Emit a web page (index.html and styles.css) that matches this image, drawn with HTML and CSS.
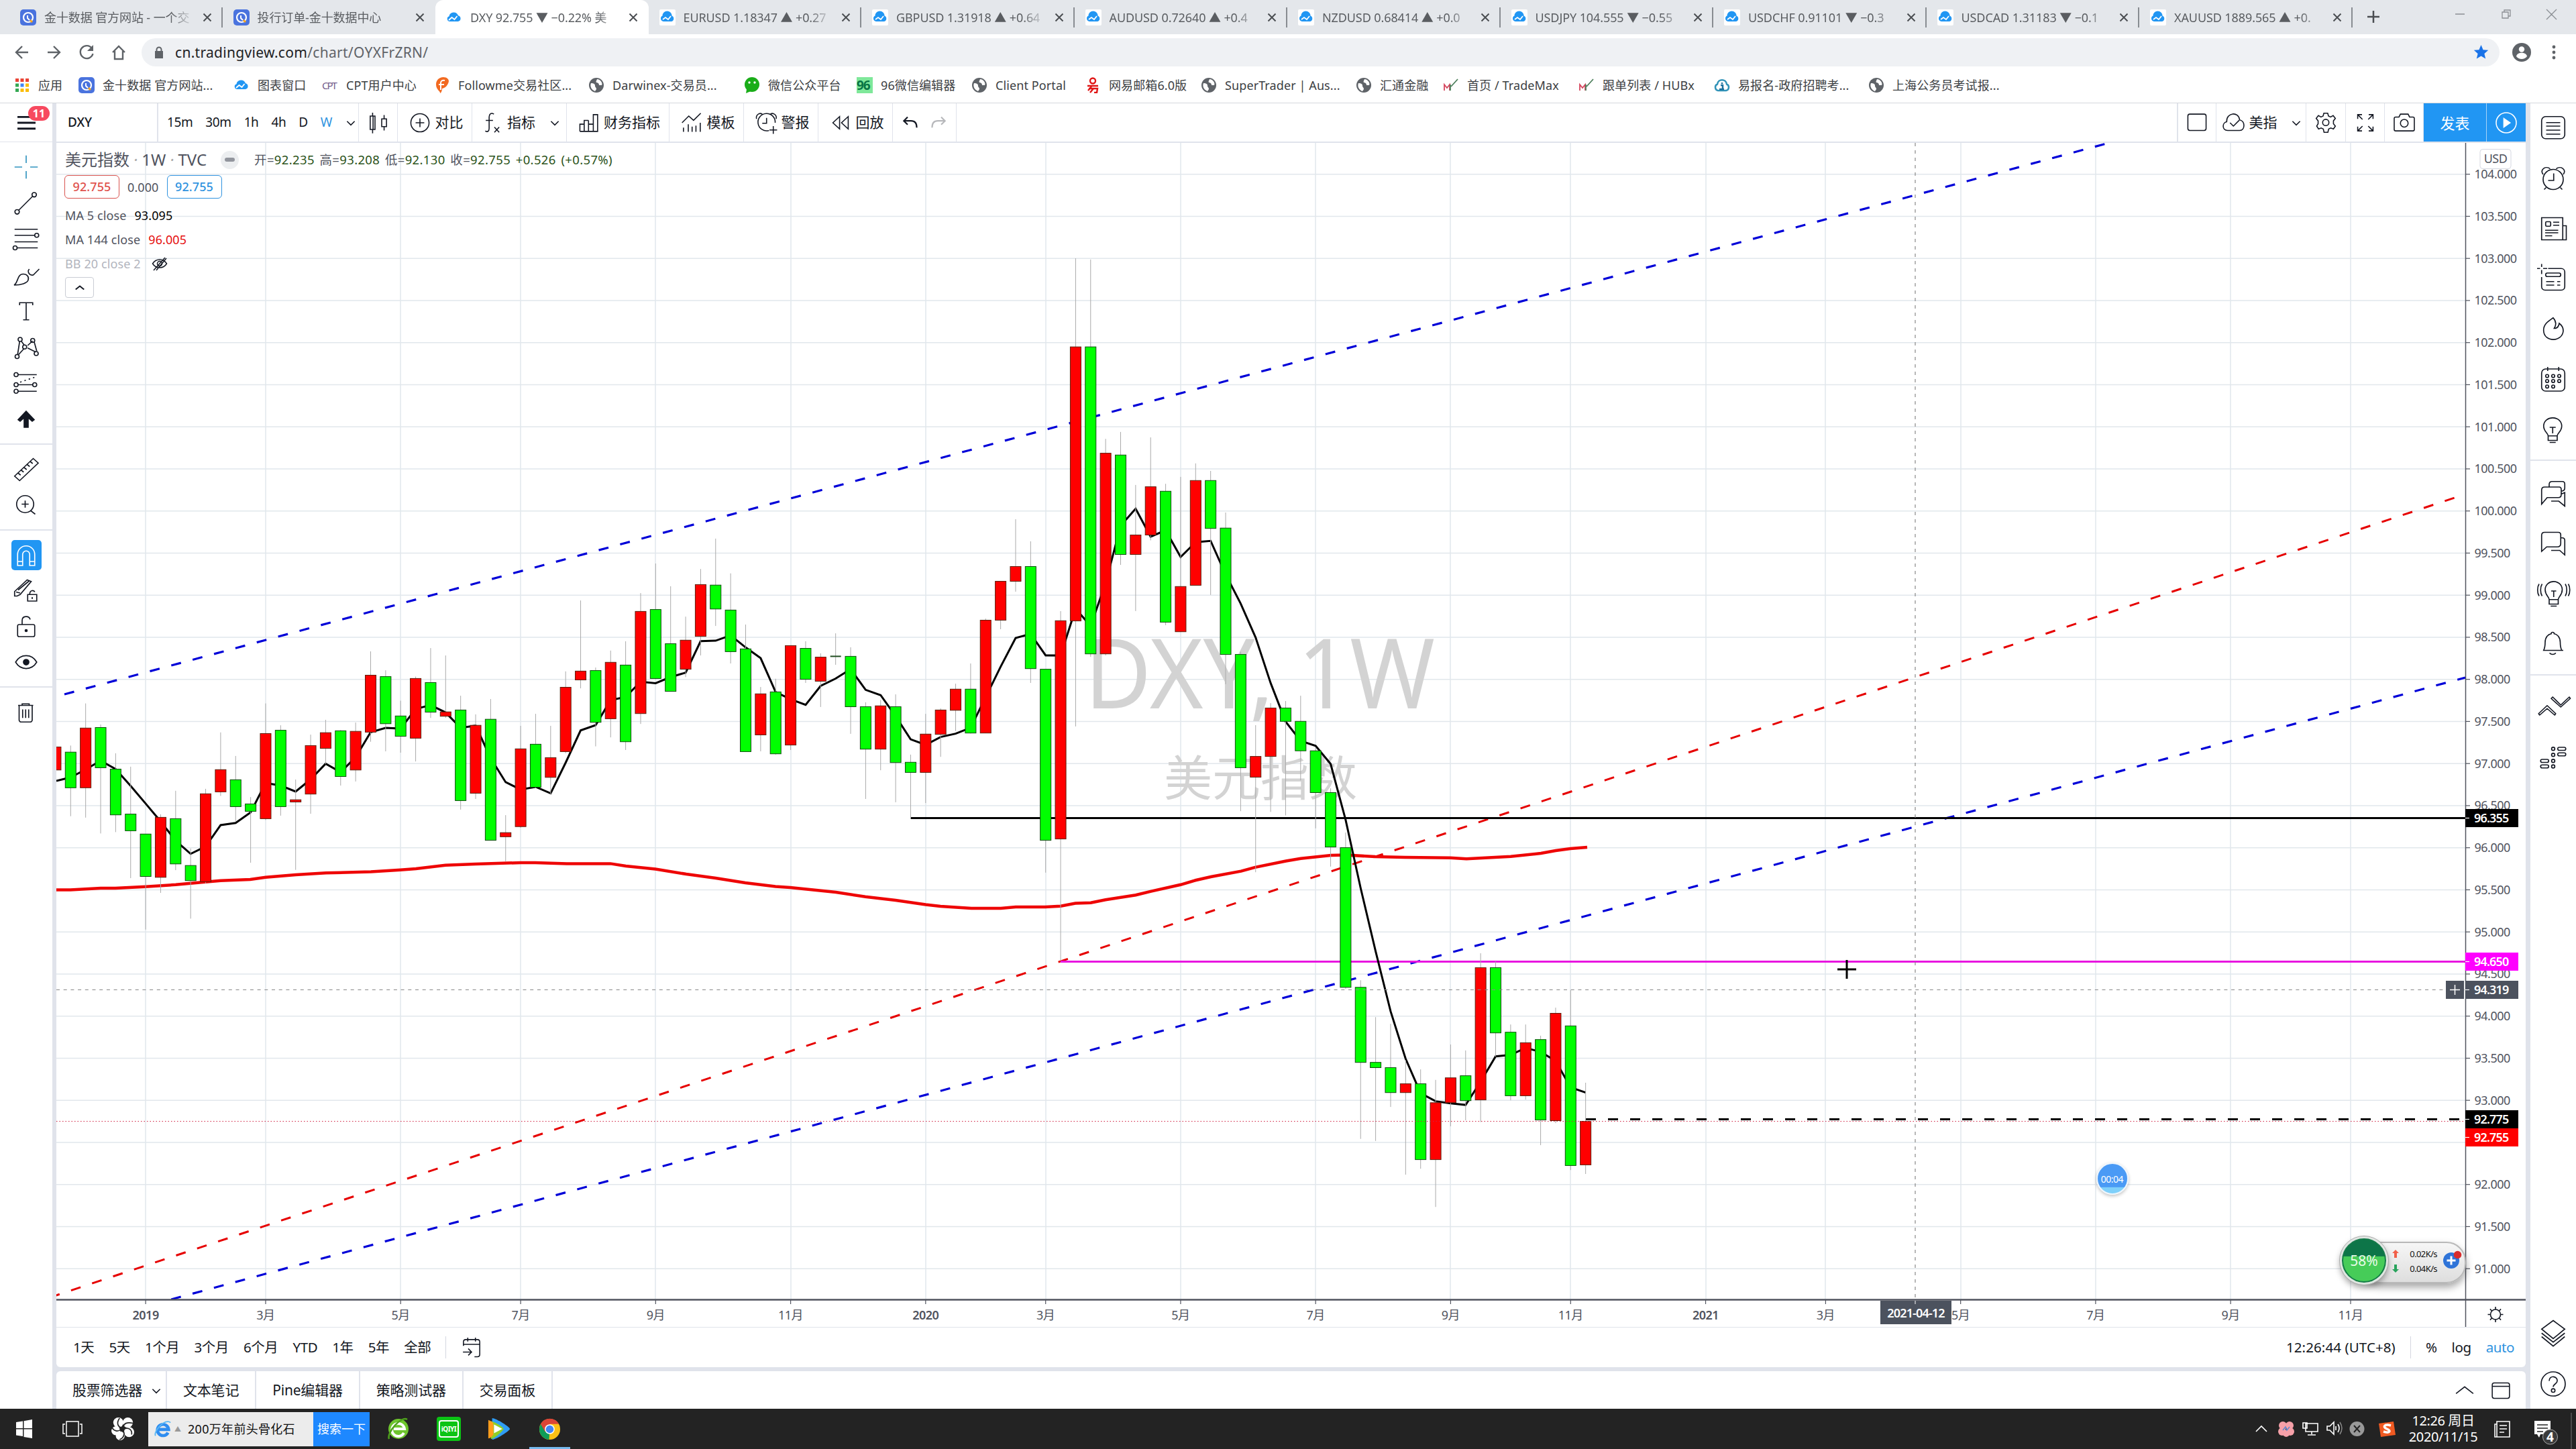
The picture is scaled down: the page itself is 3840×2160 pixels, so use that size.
FILE: index.html
```html
<!DOCTYPE html>
<html lang="zh-CN">
<head>
    <meta charset="UTF-8">
    <title>DXY 92.755 ▼ −0.22% 美指</title>
    <link rel="stylesheet" href="styles.css">
</head>
<body>
    <svg class="sprite">
        <symbol id="i-jin" viewBox="0 0 24 24"><rect width="24" height="24" rx="5" fill="#4a73de"/><circle cx="12" cy="12" r="7" fill="none" stroke="#fff" stroke-width="2.2"/><path d="M11 9v4l3 3" fill="none" stroke="#fff" stroke-width="2"/><path d="M15 16l3 3" stroke="#f5a623" stroke-width="3"/></symbol>
        <symbol id="i-cloud" viewBox="0 0 24 24"><path d="M5.500 18a4 4 0 0 1-1-7.800 7 7 0 0 1 13.500-1A4.500 4.500 0 0 1 18 18z" fill="#2196f3"/><path d="M4 16l4.500-4 4 3 4-5" fill="none" stroke="#fff" stroke-width="1.800"/></symbol>
        <symbol id="i-cloudbox" viewBox="0 0 24 24"><rect width="24" height="24" rx="2" fill="#fff"/><path d="M6 18a4.500 4.500 0 0 1-1.500-8.500 7 7 0 0 1 14 0A4.500 4.500 0 0 1 18 18z" fill="#2196f3"/><path d="M5 15l4-3 4 3 4-5" fill="none" stroke="#fff" stroke-width="1.800"/></symbol>
        <symbol id="i-globe" viewBox="0 0 24 24"><circle cx="12" cy="12" r="11" fill="#5f6368"/><path d="M4 9c4 0 6 1 6 4 0 2 2 2 2 5l-2 3c-5-2-8-7-6-12zM13 3c-1 3-2 3-1 5 2 0 4 1 4 4h4c2-4-3-9-7-9z" fill="#fff"/></symbol>
        <symbol id="i-m" viewBox="0 0 24 24"><path d="M2 20V11l4 5 4-5v9" fill="none" stroke="#d6455d" stroke-width="1.800"/><path d="M11 20v-9M12 14L22 3" stroke="#4d7f5c" stroke-width="1.800"/></symbol>
        <symbol id="i-x" viewBox="0 0 14 14"><path d="M1.500 1.500l11 11m0-11l-11 11" stroke="#4a4d51" stroke-width="2"/></symbol>
        <symbol id="i-chev" viewBox="0 0 16 16"><path d="M3 6l5 5 5-5" fill="none" stroke="#131722" stroke-width="1.400"/></symbol>
    </svg>

    <div class="tabs">
        <div class="tab"><svg><use href="#i-jin"/></svg><span>金十数据 官方网站 - 一个交</span><svg class="close"><use href="#i-x"/></svg></div>
        <div class="tab quiet"><svg><use href="#i-jin"/></svg><span>投行订单-金十数据中心</span><svg class="close"><use href="#i-x"/></svg></div>
        <div class="tab active"><svg><use href="#i-cloud"/></svg><span>DXY 92.755 ▼ −0.22% 美</span><svg class="close"><use href="#i-x"/></svg></div>
        <div class="tab"><svg><use href="#i-cloudbox"/></svg><span>EURUSD 1.18347 ▲ +0.27</span><svg class="close"><use href="#i-x"/></svg></div>
        <div class="tab"><svg><use href="#i-cloudbox"/></svg><span>GBPUSD 1.31918 ▲ +0.64</span><svg class="close"><use href="#i-x"/></svg></div>
        <div class="tab"><svg><use href="#i-cloudbox"/></svg><span>AUDUSD 0.72640 ▲ +0.4</span><svg class="close"><use href="#i-x"/></svg></div>
        <div class="tab"><svg><use href="#i-cloudbox"/></svg><span>NZDUSD 0.68414 ▲ +0.0</span><svg class="close"><use href="#i-x"/></svg></div>
        <div class="tab"><svg><use href="#i-cloudbox"/></svg><span>USDJPY 104.555 ▼ −0.55</span><svg class="close"><use href="#i-x"/></svg></div>
        <div class="tab"><svg><use href="#i-cloudbox"/></svg><span>USDCHF 0.91101 ▼ −0.3</span><svg class="close"><use href="#i-x"/></svg></div>
        <div class="tab"><svg><use href="#i-cloudbox"/></svg><span>USDCAD 1.31183 ▼ −0.1</span><svg class="close"><use href="#i-x"/></svg></div>
        <div class="tab"><svg><use href="#i-cloudbox"/></svg><span>XAUUSD 1889.565 ▲ +0.</span><svg class="close"><use href="#i-x"/></svg></div>
        <svg class="newtab" viewBox="0 0 20 20"><path d="M10 1v18M1 10h18" stroke="#4a4d51" stroke-width="2.500"/></svg>
        <svg class="window-buttons" viewBox="0 0 152 20"><path d="M0 10h14M70 7h9v9h-9zM73 7V4h9v9h-3M136 3l15 15m0-15l-15 15" fill="none" stroke="#8b8f94" stroke-width="1.300"/></svg>
    </div>

    <div class="address">
        <svg class="nav" viewBox="0 0 216 40"><g fill="none" stroke="#5f6368" stroke-width="2.400"><path d="M42 20H25m8-9l-9 9 9 9"/><path d="M71 20h17m-8-9l9 9-9 9"/><path d="M137 14a9.500 9.500 0 1 0 1.500 8"/><path d="M168 20l9-9 9 9m-15-2v12h12V18"/></g><path d="M139 9v9h-9z" fill="#5f6368"/></svg>
        <div class="url">
            <svg class="lock" viewBox="0 0 14 18"><path d="M1 7h12v11H1z" fill="#5f6368"/><path d="M3.500 8V5a3.500 3.500 0 0 1 7 0v3" fill="none" stroke="#5f6368" stroke-width="2"/></svg>
            <span class="host">cn.tradingview.com</span><span class="path">/chart/OYXFrZRN/</span>
            <svg class="star" viewBox="0 0 24 24"><path d="M12 1l3.200 7.500 8 .7-6.100 5.300 1.900 8L12 18.200 5 22.500l1.900-8L.8 9.200l8-.7z" fill="#1a73e8"/></svg>
        </div>
        <svg class="avatar" viewBox="0 0 28 28"><circle cx="14" cy="14" r="14" fill="#5f6368"/><circle cx="14" cy="9.500" r="4.200" fill="#fff"/><path d="M6 20c1-7 15-7 16 0a10 10 0 0 1-16 0z" fill="#fff"/></svg>
        <svg class="dots" viewBox="0 0 6 22"><circle cx="3" cy="3" r="2.400"/><circle cx="3" cy="11" r="2.400"/><circle cx="3" cy="19" r="2.400"/></svg>
    </div>

    <div class="bookmarks">
        <div class="bm bm-apps"><svg viewBox="0 0 24 24"><path d="M2 2h5v5H2zM9.500 2h5v5h-5zM17 2h5v5h-5z" fill="#ea4335"/><path d="M2 9.500h5v5H2z" fill="#34a853"/><path d="M9.500 9.500h5v5h-5z" fill="#4285f4"/><path d="M17 9.500h5v5h-5zM9.500 17h5v5h-5zM17 17h5v5h-5z" fill="#fbbc05"/><path d="M2 17h5v5H2z" fill="#34a853"/></svg>应用</div>
        <div class="bm bm-jin"><svg><use href="#i-jin"/></svg>金十数据 官方网站...</div>
        <div class="bm bm-chart"><svg><use href="#i-cloud"/></svg>图表窗口</div>
        <div class="bm bm-cpt"><i class="cpt">CPT</i>CPT用户中心</div>
        <div class="bm bm-follow"><svg viewBox="0 0 24 24"><path d="M9 24c1-3-6-5-6-13C3 5 7 0 14 0c5 0 8 3 8 6-1 6-5 10-10 11 0 3-1 6-3 7z" fill="#f26a21"/><path d="M10 19V9c0-3 2-5 6-4M7 11h8" fill="none" stroke="#fff" stroke-width="2"/></svg>Followme交易社区...</div>
        <div class="bm bm-darwin"><svg><use href="#i-globe"/></svg>Darwinex-交易员...</div>
        <div class="bm bm-wechat"><svg viewBox="0 0 24 24"><circle cx="12" cy="11" r="11" fill="#1aad19"/><path d="M4 18l-1 6 7-3z" fill="#1aad19"/><circle cx="8" cy="8" r="1.700" fill="#fff"/><circle cx="16" cy="8" r="1.700" fill="#fff"/></svg>微信公众平台</div>
        <div class="bm bm-editor"><i class="n96">96</i>96微信编辑器</div>
        <div class="bm bm-portal"><svg><use href="#i-globe"/></svg>Client Portal</div>
        <div class="bm bm-mail"><svg viewBox="0 0 24 24"><g fill="none" stroke="#e01515" stroke-width="2.400"><circle cx="12" cy="5.500" r="4"/><path d="M4 13h16M6 17h13l-1 6h-4M10 14l-5 6M13 17l-5 6"/></g></svg>网易邮箱6.0版</div>
        <div class="bm bm-super"><svg><use href="#i-globe"/></svg>SuperTrader | Aus...</div>
        <div class="bm bm-fx"><svg><use href="#i-globe"/></svg>汇通金融</div>
        <div class="bm bm-m"><svg><use href="#i-m"/></svg>首页 / TradeMax</div>
        <div class="bm bm-m"><svg><use href="#i-m"/></svg>跟单列表 / HUBx</div>
        <div class="bm bm-exam"><svg viewBox="0 0 24 24"><path d="M6 20a5 5 0 0 1-1-9.500C6 2 18 2 19 10.500A5 5 0 0 1 18 20z" fill="none" stroke="#3193b8" stroke-width="2.500"/><path d="M12 8v2m-2 2h3v5m-5 1h7" stroke="#1b6f9c" stroke-width="2.500" fill="none"/></svg>易报名-政府招聘考...</div>
        <div class="bm"><svg><use href="#i-globe"/></svg>上海公务员考试报...</div>
    </div>

    <div class="app">
        <div class="rail rail-left">
            <div class="menu"><svg viewBox="0 0 28 24"><path d="M0 3h28M0 12h28M0 21h28" stroke="#131722" stroke-width="3"/></svg><b>11</b></div>
            <div class="group">
                <svg class="blue" viewBox="0 0 28 28"><path d="M14 2.500V10M14 18v7.500M2.500 14H10M18 14h7.500"/></svg>
                <svg viewBox="0 0 28 28"><circle cx="5" cy="22.500" r="2.200"/><circle cx="22" cy="5.500" r="2.200"/><path d="M6.500 21L20.500 7"/></svg>
                <svg viewBox="0 0 28 28"><path d="M2.500 4.500h23M2.500 10.500h20M2.500 17h23M5 23h20.500"/><circle cx="24.500" cy="10.500" r="2"/><circle cx="3" cy="23" r="2"/></svg>
                <svg viewBox="0 0 28 28"><path d="M2 24c4-2 3-11 9-11 4 0 6 3 5 6-1 3-7 5-14 5zM16 9.500c0 3 2 5 5 4.500L27 8M16 10l1-2"/></svg>
                <svg viewBox="0 0 28 28"><path d="M7.500 8V5.500h13V8M14 5.500v17M11 22.500h6"/></svg>
                <svg viewBox="0 0 28 28"><path d="M5.500 21L7.500 8M9 7.500l3 4M15.500 12l5-4.500M22 8.500l2.500 9M6.500 21L12 15M15.500 14.500l8 4"/><circle cx="8" cy="6" r="2"/><circle cx="20.500" cy="7" r="2"/><circle cx="12.500" cy="13.500" r="2"/><circle cx="5" cy="23" r="2"/><circle cx="24" cy="20" r="2"/></svg>
                <svg viewBox="0 0 28 28"><circle cx="4" cy="5" r="2"/><circle cx="4" cy="15" r="2"/><circle cx="22.500" cy="15" r="2"/><circle cx="4" cy="21.500" r="2"/><path d="M6 5h18.500M6 15h14.500M6 21.500h18.500"/><path d="M8 12.500L24 7" stroke-dasharray="1.500 3"/></svg>
                <svg viewBox="0 0 28 28"><path d="M14 6l8 8.500-2 1.500-4-3.500V22h-4v-9.500L8 16l-2-1.500z" fill="#131722"/></svg>
            </div>
            <div class="group">
                <svg viewBox="0 0 28 28"><path d="M2.500 20.500L21 3l5 4.500L7.500 25zM6 17.500l2.500 2M9 14.500l2.500 2M12 12l2.500 2M15 9l2.500 2M18 6l2.500 2"/></svg>
                <svg viewBox="0 0 28 28"><circle cx="13" cy="13" r="8.500"/><path d="M13 9.500v7M9.500 13h7M18.500 19.500l4.500 3.500"/></svg>
            </div>
            <div class="group">
                <span class="magnet"><svg viewBox="0 0 28 28"><path d="M5.500 24V13a8.500 8.500 0 0 1 17 0v11h-5V13a3.500 3.500 0 0 0-7 0v11zM5.500 20h5M17.500 20h5"/></svg></span>
                <svg viewBox="0 0 28 28"><path d="M2.500 19v-4.500L15 3l4 1.500L8 17.500 5 19zM4 15l4 1M6 13L17 4"/><path d="M15.500 17.500h9v6.500h-9zM17.500 17.500c0-5 4.500-4.500 5-2.500M20 20v2"/></svg>
                <svg viewBox="0 0 28 28"><rect x="5.500" y="12" width="17" height="12" rx="1.500"/><path d="M10 12V8c0-5 7-5 8-1"/><circle cx="14" cy="18" r="1" fill="#131722"/></svg>
                <svg viewBox="0 0 28 28"><path d="M3.500 14c5-8.500 16-8.500 21 0-5 8.500-16 8.500-21 0z"/><circle cx="14" cy="14" r="2.700" fill="#131722"/></svg>
            </div>
            <div class="group last">
                <svg viewBox="0 0 28 28"><path d="M6 7h15M10 7V5.500h7V7M7 7v14.500c0 1 1 2 2 2h9c1 0 2-1 2-2V7M10.500 11v8.500M13.500 11v8.500M16.500 11v8.500"/></svg>
            </div>
        </div>

        <div class="main">
            <div class="toolbar">
                <div class="cell symbol">DXY</div>
                <div class="cell intervals"><span>15m</span><span>30m</span><span>1h</span><span>4h</span><span>D</span><span class="on">W</span><svg class="chev"><use href="#i-chev"/></svg></div>
                <div class="cell w58"><svg class="ico" viewBox="0 0 28 28"><path d="M8.500 7v14M5.500 7h5v14h-5zM8 3.500V7M8 21v4M17.500 10h5v8h-5zM20 6v4M20 18v4"/></svg></div>
                <div class="cell w111"><svg class="ico" viewBox="0 0 28 28"><circle cx="14" cy="14" r="9.500"/><path d="M14 9.500v9M9.500 14h9"/></svg>对比</div>
                <div class="cell w141"><svg class="ico" viewBox="0 0 28 28"><path d="M17 5c-3-2-5 0-5 3v12c0 3-2 4-4 2.500M8.500 11.500H16M17.500 18.500l5 5.500M22.500 18.500l-5 5.500"/></svg>指标<svg class="chev"><use href="#i-chev"/></svg></div>
                <div class="cell w153"><svg class="ico" viewBox="0 0 28 28"><path d="M4.500 23v-7.500h4.500V23M9 23V11.500h4.500M13.500 23V11.500M18.500 23V5.500H23V23zM14 15.500h4.500M4.500 23h14"/></svg>财务指标</div>
                <div class="cell w111"><svg class="ico" viewBox="0 0 28 28"><path d="M4 14l7-7 5 4.500L23.500 4M5.500 19v4.500M10.500 15.500v8M14.500 18v5.500M18.500 17v6.500M23 14v9.500"/></svg>模板</div>
                <div class="cell w111"><svg class="ico" viewBox="0 0 28 28"><path d="M17 22a9 9 0 1 1 6.500-8M14.500 9v5.500H10M21.500 17.500v8M17.500 21.500h8M4 10c-1-4 3-7 6-5M24.500 10c1-4-3-7-6-5"/></svg>警报</div>
                <div class="cell w111"><svg class="ico" viewBox="0 0 28 28"><path d="M13 7.500L6 14l7 6.500zM22 7.500L15 14l7 6.500z"/></svg>回放</div>
                <div class="cell w95"><svg class="ico" viewBox="0 0 28 28"><path d="M10.500 8L6.500 12l4 4M7 12h7c4 0 6 2 6 7" stroke-width="1.500"/></svg><svg class="ico faded" viewBox="0 0 28 28"><path d="M17.500 8l4 4-4 4M21 12h-7c-4 0-6 2-6 7" stroke-width="1.500"/></svg></div>
                <div class="fill"></div>
                <div class="cell w59 lined"><svg class="ico" viewBox="0 0 28 28"><rect x="4.500" y="5" width="19" height="17" rx="2"/></svg></div>
                <div class="cell w134"><svg class="ico" viewBox="0 0 28 28"><path d="M7.500 22c-6 0-6-8-1-9C6 3 19 2 20 11c6 1 6 11 0 11zM10 14l3.500 3.500 6-6"/></svg>美指<svg class="chev"><use href="#i-chev"/></svg></div>
                <div class="cell w59"><svg class="ico" viewBox="0 0 28 28"><path d="M12 4h4l.8 3 2.200 1 2.700-1.500 2.300 3L22 12v3l2 2.500-2 3-2.800-1-2.200 1-.8 3.500h-4l-.8-3.500-2.200-1-2.700 1-2-3L6 15v-3L4 9.500l2.300-3L9 8l2.200-1z"/><circle cx="14" cy="13.700" r="3.300"/></svg></div>
                <div class="cell w58"><svg class="ico" viewBox="0 0 28 28"><path d="M6 10V5.500h4.500M6 5.500l5 5M22 10V5.500h-4.500M22 5.500l-5 5M6 18v4.500h4.500M6 22.500l5-5M22 18v4.500h-4.500M22 22.500l-5-5"/></svg></div>
                <div class="cell w58"><svg class="ico" viewBox="0 0 28 28"><path d="M10 5h8l1.500 3H23c1 0 1.500.5 1.500 1.500V21c0 1-.5 1.500-1.500 1.500H5c-1 0-1.500-.5-1.500-1.500V9.500C3.500 8.500 4 8 5 8h3.500z"/><circle cx="14" cy="14.500" r="4"/></svg></div>
                <div class="cell publish">发表</div>
                <div class="cell play"><svg class="ico" viewBox="0 0 28 28"><circle cx="14" cy="14" r="10.500"/><path d="M11.500 9.500l6.500 4.500-6.500 4.500z" fill="#fff"/></svg></div>
            </div>

            <div class="chart">
                <svg id="chart" viewBox="84 213 3681 1765"></svg>
                <div class="legend">
                    <div class="title">美元指数 <em>·</em> 1W <em>·</em> TVC<i class="pill"></i><span class="ohlc">开=<b>92.235</b> 高=<b>93.208</b> 低=<b>92.130</b> 收=<b>92.755</b> <b>+0.526 (+0.57%)</b></span></div>
                    <div class="prices"><span class="sell">92.755</span><span>0.000</span><span class="buy">92.755</span></div>
                    <div class="study">MA 5 close<b>93.095</b></div>
                    <div class="study">MA 144 close<b class="red">96.005</b></div>
                    <div class="study off">BB 20 close 2<svg viewBox="0 0 24 24"><path d="M1.500 12c5-8 16-8 21 0-5 8-16 8-21 0zM3 22L20 3M7 22L22 4" /><circle cx="12" cy="12" r="3.500"/></svg></div>
                    <div class="collapse"><svg viewBox="0 0 16 16"><path d="M3 10l5-4 5 4"/></svg></div>
                </div>
                <div class="timer">00:04</div>
                <div class="netball">
                    <div class="ball">58%</div>
                    <div class="speeds"><span><svg viewBox="0 0 10 12"><path d="M5 0l5 5H7v7H3V5H0z" fill="#f1604a"/></svg>0.02K/s</span><span><svg viewBox="0 0 10 12"><path d="M5 12l5-5H7V0H3v7H0z" fill="#28a35c"/></svg>0.04K/s</span></div>
                    <svg class="plus" viewBox="0 0 28 28"><circle cx="12" cy="16" r="12" fill="#2f74d8"/><path d="M12 9.500v13M5.500 16h13" stroke="#fff" stroke-width="3"/><circle cx="21.500" cy="7.500" r="5.800" fill="#d92b2b"/></svg>
                </div>
            </div>

            <div class="rangebar">
                <span>1天</span><span>5天</span><span>1个月</span><span>3个月</span><span>6个月</span><span>YTD</span><span>1年</span><span>5年</span><span>全部</span>
                <i class="line"></i>
                <svg class="ico" viewBox="0 0 28 28"><path d="M5.500 12V8c0-1.500 1-2.500 2.500-2.500h12c1.500 0 2.500 1 2.500 2.500v13c0 1.500-1 2.500-2.500 2.500h-3M5.500 10.500h17M10 3.500v4M18 3.500v4M5 18.500h9M10.500 15l3.500 3.500-3.500 3.500"/></svg>
                <div class="fill"></div>
                <span class="clock">12:26:44 (UTC+8)</span><i class="line"></i><span>%</span><span>log</span><span class="on">auto</span>
            </div>

            <div class="panels">
                <div>股票筛选器<svg class="chev"><use href="#i-chev"/></svg></div><div>文本笔记</div><div>Pine编辑器</div><div>策略测试器</div><div>交易面板</div>
                <div class="fill"></div>
                <svg class="ico" viewBox="0 0 28 28"><path d="M5 17l9-7 9 7"/></svg>
                <svg class="ico" viewBox="0 0 28 28"><rect x="5" y="6" width="18" height="16" rx="2"/><path d="M5 9.500h18"/></svg>
            </div>
        </div>

        <div class="rail rail-right">
            <div class="group">
                <svg viewBox="0 0 28 28"><rect x="2.500" y="2.500" width="23" height="22" rx="4"/><path d="M7 8.500h14M7 12h14M7 16h14M7 20h14"/></svg>
                <svg viewBox="0 0 28 28"><circle cx="14" cy="15" r="10"/><path d="M14.500 9v7H9M4 10C0 5 7 1 11 4.500M24 10c4-5-3-9-7-5.500M7 23l-2 2M21 23l2 2"/></svg>
                <svg viewBox="0 0 28 28"><path d="M2.500 3h21v22h-21zM23.500 11h3.500v14h-3.500M6 15.500h13M6 18h13M6 21h7M14 7.500h6M14 10.500h6"/><rect x="6.500" y="7" width="5" height="4.500" rx="1"/></svg>
                <svg viewBox="0 0 28 28"><path d="M9 3.500h13c2 0 3.500 1.500 3.500 3.500v14.500c0 2-1.500 3.500-3.500 3.500H6c-2 0-3.500-1.500-3.500-3.500V12M2.500-1v3M2.500 5v4M-2 3.500h3M4 3.500h4M7 16.500h8M7 20h8M18 16.500h3M18 20h3"/><rect x="6.500" y="8" width="15" height="3.500" rx="1.700"/></svg>
                <svg viewBox="0 0 28 28"><path d="M14 2.500c-4 3-10 6-9.500 13C5 27 23 27 24 15.500c0-4-2-6-4-7.500-.5 3-2 5-5 5 2-3 2-7-1-10.500z"/></svg>
                <svg viewBox="0 0 28 28"><rect x="2.500" y="4" width="23" height="22" rx="4"/><path d="M8.500 2v4M19.500 2v4"/><circle cx="8" cy="11" r="1.500"/><circle cx="14" cy="11" r="1.500"/><circle cx="20" cy="11" r="1.500"/><circle cx="8" cy="16" r="1.500"/><circle cx="14" cy="16" r="1.500"/><circle cx="20" cy="16" r="1.500"/><circle cx="8" cy="21.500" r="1.500"/><circle cx="14" cy="21.500" r="1.500"/></svg>
                <svg viewBox="0 0 28 28"><path d="M9 20.500c0-3-4.500-4-4.500-10C5 0 22 0 22.500 10.500c0 6-4.500 7-4.500 10zM9 20.500v4.500h9v-4.500M10.500 27h6M13.500 18v-6M10.500 12h6"/></svg>
            </div>
            <div class="group">
                <svg viewBox="0 0 28 28"><path d="M2.500 25V11c0-2 1-3 3-3H20c1.500 0 2 1 2 2.500v5c0 2-1 3-3 3H8zM10 8V5.500c0-2 1-3 3-3h10c1.500 0 2.500 1 2.500 2.500v4c0 2-1.500 3-3.500 3M22 15l3.500-1.500V27l-6-5H12"/></svg>
                <svg viewBox="0 0 28 28"><path d="M2.500 22V6c0-2 1-3 3-3H19c1.500 0 2.500 1 2.500 2.500V14c0 2-1 3.500-3.500 3.500H7.500zM21.500 8.500H23c1.500 0 2.500 1 2.500 2.500v14.500l-5-4.500H12"/></svg>
                <svg viewBox="0 0 28 28"><path d="M10 20.500c0-3-4-4-4-10C6.500 0 22.500 0 23 10.500c0 6-4 7-4 10zM10 20.500v4.500h9v-4.500M11.500 27h6M14.500 18v-6M12 12h5M3 5c-2 3-2 9 0 12M0 5c-2 3-2 9 0 12M26 5c2 3 2 9 0 12M29 5c2 3 2 9 0 12"/></svg>
                <svg viewBox="0 0 28 28"><path d="M4.500 21c1-2 1.500-4 1.500-8 0-5 3-8 6-8.500 0-2 3-2 3 0 3 .5 6 3.500 6 8.500 0 4 .5 6 1.500 8zM4 21h20M10.500 23.500c1 2 5 2 6 0"/></svg>
            </div>
            <div class="group last">
                <svg viewBox="0 0 28 28"><path d="M-.5 20.500L8 12.500l8.500 8-1 1.500L8 15.500.5 22zM12 5.500l1.500-1.500 8 8L30 4l1 1.500-9.500 8.500z" stroke-linejoin="round"/></svg>
                <svg viewBox="0 0 28 28"><rect x="1.500" y="16" width="8" height="3" rx="1.500"/><rect x="1.500" y="21.500" width="8" height="3" rx="1.500"/><rect x="18.500" y="4" width="8" height="3" rx="1.500"/><rect x="18.500" y="9.500" width="8" height="3" rx="1.500"/><circle cx="14" cy="5.500" r="1.600"/><circle cx="14" cy="11.500" r="1.600"/><circle cx="14" cy="17.500" r="1.600"/><circle cx="14" cy="23" r="1.600"/></svg>
            </div>
            <div class="fill"></div>
            <svg viewBox="0 0 28 28"><path d="M14 1l11.500 8.500L14 19 2.500 9.500zM2.500 13.500L14 22.500l11.500-9M2.500 17L14 26.500 25.500 17"/></svg>
            <svg viewBox="0 0 28 28"><circle cx="14" cy="14" r="12"/><path d="M10 11c0-6 8.500-5 8 0 0 3-4 3-4 6"/><circle cx="14" cy="20.500" r="1.800"/></svg>
        </div>
    </div>

    <div class="taskbar">
        <svg class="start" viewBox="0 0 24 28"><path d="M0 4l10-1.500V13H0zM11.500 2.200L24 0v13H11.500zM0 14.500h10V25L0 23.500zM11.500 14.500H24V28l-12.500-2z" fill="#fff"/></svg>
        <svg class="taskview" viewBox="0 0 30 24"><path d="M6 1h18v22H6zM4 5H1v14h3M26 5h3v14h-3" fill="none" stroke="#fff" stroke-width="1.500"/></svg>
        <svg class="flower" viewBox="0 0 36 36"><g fill="#fff"><circle cx="11" cy="8" r="8"/><circle cx="26" cy="8" r="8"/><circle cx="7" cy="21" r="7"/><circle cx="28" cy="23" r="8"/><circle cx="14" cy="29" r="7"/></g><path d="M18 17C9 15 8 8 13 1M19 16c0-7 6-9 15-7M20 18c8-3 13 2 12 9M18 20c4 5 2 12-5 15M16 18C10 24 4 21 1 16" fill="none" stroke="#232323" stroke-width="1.800"/></svg>
        <div class="search">
            <svg viewBox="0 0 28 28"><path d="M22 20a9 9 0 1 1 1-5H7" fill="none" stroke="#2f8df0" stroke-width="5"/><path d="M2 25C-2 18 18-4 26 4" fill="none" stroke="#58b7f5" stroke-width="2"/></svg>
            <small>▲</small><span>200万年前头骨化石</span><b>搜索一下</b>
        </div>
        <svg class="app1" viewBox="0 0 32 36"><circle cx="16" cy="18" r="15" fill="#6ec52e"/><path d="M24 24a9.500 9.500 0 1 1 1-6H9" fill="none" stroke="#fff" stroke-width="4"/><path d="M2 33C-2 24 20-2 29 4" fill="none" stroke="#4ea31c" stroke-width="2.500"/></svg>
        <div class="iqiyi"><span>iQIYI</span></div>
        <svg class="app3" viewBox="0 0 36 36"><path d="M7 1c6 0 28 14 28 17S13 35 7 35z" fill="#2f9df4"/><path d="M5 6c5 0 20 9 20 12S10 34 5 34z" fill="#8fce28"/><path d="M1 4c3 1 7 3 8 6v17c-2 3-5 6-8 6z" fill="#ff9d1c"/><path d="M10 11l13 7-13 7z" fill="#fff"/></svg>
        <div class="chrome"><svg viewBox="0 0 34 34"><circle cx="17" cy="17" r="16" fill="#fbc116"/><path d="M17 17l-1 16A16 16 0 0 1 3.100 9z" fill="#0f9d58"/><path d="M17 17V9h14a16 16 0 0 0-28 0l7 12z" fill="#db4437"/><circle cx="17" cy="17" r="7.500" fill="#fff"/><circle cx="17" cy="17" r="6" fill="#4285f4"/></svg></div>
        <div class="fill"></div>
        <svg class="tray" viewBox="3355 2106 225 48">
            <g fill="none" stroke="#fff" stroke-width="1.600"><path d="M3363 2134l8-8 8 8"/><path d="M3437 2122h18v12h-18zM3433 2121h6v8h-6zM3446 2134v4M3440 2139h12"/><path d="M3469 2126h4l6-6v18l-6-6h-4zM3482 2126v6M3485 2123q4 6 0 12"/></g>
            <path d="M3488 2120q6 9 0 18" fill="none" stroke="#888" stroke-width="1.500"/>
            <g fill="#f5a0a8"><circle cx="3403" cy="2125" r="6"/><circle cx="3413" cy="2125" r="6"/><circle cx="3402" cy="2134" r="6"/><circle cx="3414" cy="2134" r="6"/><circle cx="3408" cy="2137" r="5"/></g><path d="M3403 2132l4-5 2 5 4-5" fill="none" stroke="#5f88cf" stroke-width="1.500"/>
            <circle cx="3513.500" cy="2130" r="11" fill="#999"/><path d="M3509 2125l9 10m0-10l-9 10" stroke="#232323" stroke-width="2"/>
            <path d="M3546 2122l22-3 3 20-22 3z" fill="#f05a22"/><path d="M3564 2125c-9-3-13 2-6 5s4 7-5 4" fill="none" stroke="#fff" stroke-width="3.500"/>
        </svg>
        <div class="datetime"><span>12:26 周日</span><span>2020/11/15</span></div>
        <svg class="notes" viewBox="3710 2106 125 54"><path d="M3722 2119h19v23h-22v-19h3zM3722 2119v23M3726 2125h11M3726 2130h11M3726 2135h7" fill="none" stroke="#fff" stroke-width="1.600"/><path d="M3778 2118h24v20h-15l-2 5-3-5h-4z" fill="#fff"/><path d="M3782 2124h16M3782 2129h16M3782 2134h9" stroke="#232323" stroke-width="1.500"/><circle cx="3801.500" cy="2142" r="11" fill="#3b3b3b" stroke="#aaa"/><text x="3801.500" y="2149" text-anchor="middle">4</text><path d="M3833 2100v60" stroke="#777"/></svg>
    </div>

    <script src="script.js"></script>
</body>
</html>
```
FILE: styles.css
```css
* {
    box-sizing: border-box;
}

body {
    margin: 0;
    width: 3840px;
    height: 2160px;
    overflow: hidden;
    display: flex;
    flex-direction: column;
    background: #fff;
    color: #131722;
    font-family: "Noto Sans", "Noto Sans CJK SC", sans-serif;
    font-size: 18px;
    line-height: 1;
}

svg {
    display: block;
    flex: none;
}

.sprite {
    display: none;
}

.fill {
    flex: 1;
}

/* browser tabs */
.tabs {
    flex: none;
    height: 51px;
    padding-left: 14px;
    background: #e4e7eb;
    display: flex;
    position: relative;
}

.tab {
    width: 317.5px;
    padding: 0 16px;
    display: flex;
    align-items: center;
    gap: 12px;
    color: #5a5d61;
    position: relative;
}

.tab::after {
    content: "";
    position: absolute;
    right: 0;
    top: 11px;
    width: 2px;
    height: 30px;
    background: #888c91;
}

.tab.quiet::after,
.tab.active::after {
    display: none;
}

.tab.active {
    background: #fff;
    border-radius: 12px 12px 0 0;
}

.tab svg {
    width: 24px;
    height: 24px;
}

.tab span {
    flex: 1;
    white-space: nowrap;
    line-height: 30px;
    letter-spacing: -0.1px;
    -webkit-mask-image: linear-gradient(90deg, #000 84%, transparent);
    mask-image: linear-gradient(90deg, #000 84%, transparent);
}

.tab .close {
    width: 14px;
    height: 14px;
}

.newtab {
    width: 20px;
    height: 20px;
    margin: 15px 0 0 21px;
}

.window-buttons {
    width: 152px;
    height: 20px;
    margin: 11px 0 0 112px;
}

/* address row */
.address {
    flex: none;
    height: 54px;
    display: flex;
    align-items: center;
}

.nav {
    width: 216px;
    height: 40px;
    margin-right: -5px;
}

.url {
    width: 3515px;
    height: 42px;
    margin-top: -1px;
    padding: 0 16px 0 19px;
    border-radius: 21px;
    background: #eff1f4;
    display: flex;
    align-items: center;
    font-size: 21px;
    line-height: 30px;
    letter-spacing: 0.3px;
}

.lock {
    width: 14px;
    height: 18px;
    margin-right: 17px;
}

.host {
    color: #202124;
}

.path {
    color: #5f6368;
    flex: 1;
}

.star {
    width: 23px;
    height: 23px;
}

.avatar {
    width: 28px;
    height: 28px;
    margin-left: 19px;
}

.dots {
    width: 6px;
    height: 22px;
    margin-left: 31px;
    fill: #5f6368;
}

/* bookmarks */
.bookmarks {
    flex: none;
    height: 49px;
    padding: 0 0 4px 21px;
    border-bottom: 1px solid #d5d8dc;
    display: flex;
    align-items: center;
    color: #3c4043;
}

.bm {
    flex: none;
    display: flex;
    align-items: center;
    gap: 12px;
    white-space: nowrap;
    line-height: 30px;
    letter-spacing: 0.1px;
}

.bm-apps { width: 96px; }
.bm-jin { width: 231px; }
.bm-chart { width: 132px; }
.bm-cpt { width: 167px; }
.bm-follow { width: 230px; }
.bm-darwin { width: 232px; }
.bm-wechat { width: 168px; }
.bm-editor { width: 171px; }
.bm-portal { width: 169px; }
.bm-mail { width: 173px; }
.bm-super { width: 231px; }
.bm-fx { width: 130px; }
.bm-m { width: 202px; }
.bm-exam { width: 230px; }

.bm svg {
    width: 24px;
    height: 24px;
}

.bm i {
    width: 24px;
    font-style: normal;
}

.cpt {
    color: #75608c;
    font-size: 15px;
    letter-spacing: -2px;
}

.n96 {
    height: 24px;
    background: #7fe89a;
    color: #087545;
    font-size: 19px;
    font-weight: 700;
    line-height: 24px;
    letter-spacing: -1px;
}

/* trading app */
.app {
    height: 1946px;
    flex: none;
    display: flex;
    background: #e0e3eb;
}

.rail {
    flex: none;
    background: #fff;
    display: flex;
    flex-direction: column;
    align-items: center;
}

.rail svg,
.ico {
    fill: none;
    stroke: #131722;
    stroke-width: 1.1;
    overflow: visible;
}

.rail-left {
    width: 78px;
}

.menu {
    width: 100%;
    height: 58px;
    border-bottom: 1px solid #e0e3eb;
    position: relative;
}

.menu svg {
    width: 27px;
    height: 24px;
    margin: 17px 0 0 26px;
}

.menu b {
    position: absolute;
    left: 42px;
    top: 4px;
    width: 32px;
    height: 22px;
    border-radius: 11px;
    background: #f7495f;
    color: #fff;
    font-size: 16px;
    line-height: 22px;
    text-align: center;
}

.group {
    width: 100%;
    padding: 10px 0 9px;
    border-bottom: 2px solid #e0e3eb;
    display: flex;
    flex-direction: column;
    align-items: center;
}

.group.last {
    border: 0;
}

.rail-left .group svg {
    width: 42px;
    height: 42px;
    margin: 5.900px 0;
}

.rail-left .group + .group svg {
    margin: 5.600px 0;
}

.rail-left .group svg.blue {
    stroke: #2f93bf;
}

.magnet {
    width: 45px;
    height: 45px;
    margin: 4.400px 0;
    border-radius: 5px;
    background: #2196f3;
    display: flex;
    justify-content: center;
    align-items: center;
}

.rail-left .group .magnet svg {
    stroke: #fff;
    margin: 0;
}

.rail-right {
    width: 68px;
}

.rail-right svg {
    width: 42px;
    height: 42px;
    margin: 16.400px 0;
}

.rail-right > .group {
    padding-bottom: 8px;
}

.rail-right > .group:first-child {
    padding-top: 0;
}

.main {
    width: 3681px;
    margin: 0 7px 0 6px;
    display: flex;
    flex-direction: column;
}

.toolbar {
    flex: none;
    height: 59px;
    background: #fff;
    border-bottom: 2px solid #e0e3eb;
    display: flex;
}

.cell {
    height: 57px;
    border-right: 1px solid #e0e3eb;
    display: flex;
    align-items: center;
    justify-content: center;
    font-size: 21px;
}

.cell.lined {
    border-left: 2px solid #e0e3eb;
}

.ico {
    width: 40px;
    height: 40px;
}

.faded {
    opacity: 0.3;
}

.chev {
    width: 18px;
    height: 18px;
}

.symbol {
    width: 152px;
    padding-left: 17px;
    justify-content: flex-start;
    border-right-width: 2px;
    font-size: 19px;
    font-weight: 500;
}

.intervals {
    width: 299px;
    padding-left: 13px;
    justify-content: flex-start;
    gap: 19px;
    font-size: 19px;
    letter-spacing: -0.4px;
}

.on {
    color: #2f93e0;
}

.w58 { width: 58px; }
.w59 { width: 59px; }
.w95 { width: 95px; }
.w111 { width: 111px; gap: 3px; }
.w134 { width: 134px; gap: 3px; }
.w141 { width: 141px; gap: 4px; }
.w153 { width: 153px; gap: 2px; }

.w141 .chev,
.w134 .chev {
    margin-left: 16px;
}

.publish,
.play {
    background: #2196f3;
    color: #fff;
    border-right: 1px solid #a6d2f7;
}

.publish {
    width: 94px;
    font-size: 22px;
}

.play {
    width: 58px;
    border: 0;
}

.play .ico {
    stroke: #fff;
}

.chart {
    flex: none;
    height: 1765px;
    background: #fff;
    position: relative;
}

#chart {
    width: 3681px;
    height: 1765px;
}

#chart text {
    font-size: 18px;
    letter-spacing: -0.5px;
    fill: #50535e;
}

#chart .tag {
    fill: #fff;
    font-weight: 600;
    letter-spacing: -0.85px;
}

#chart .year {
    font-weight: 600;
}

#chart .mark {
    font-size: 144px;
    fill: #d3d3d3;
    letter-spacing: 0;
}

#chart .mark-cn {
    font-size: 72px;
    fill: #d3d3d3;
    letter-spacing: 0;
}

/* legend over the chart */
.legend {
    position: absolute;
    left: 13px;
    top: 10px;
    color: #50535e;
    letter-spacing: 0.1px;
}

.legend b {
    font-weight: 400;
}

.title {
    display: flex;
    align-items: center;
    gap: 6px;
    height: 30px;
    font-size: 24px;
    letter-spacing: 0;
    white-space: nowrap;
}

.title em {
    color: #aaa;
}

.pill {
    width: 27px;
    height: 27px;
    margin-left: 15px;
    border-radius: 50%;
    background: #eceef0;
    display: flex;
    align-items: center;
    justify-content: center;
}

.pill::after {
    content: "";
    width: 15px;
    height: 6px;
    border-radius: 3px;
    background: #92959d;
}

.ohlc {
    margin-left: 17px;
    font-size: 18.500px;
    letter-spacing: 0.35px;
    word-spacing: 2.500px;
}

.ohlc b {
    color: #2a5218;
}

.prices {
    display: flex;
    align-items: center;
    margin: 8px 0 7px -1px;
    gap: 12px;
}

.prices .sell,
.prices .buy {
    width: 82px;
    height: 35px;
    border: 1.500px solid #d9534f;
    border-radius: 6px;
    color: #e0524d;
    font-weight: 500;
    line-height: 32px;
    text-align: center;
}

.prices .buy {
    border-color: #2f93e0;
    color: #2f93e0;
}

.study {
    height: 36px;
    line-height: 36px;
    display: flex;
    align-items: center;
}

.study b {
    margin-left: 12px;
    color: #000;
}

.study b.red {
    color: #e50c0c;
}

.study.off {
    color: #b2b5be;
}

.study svg {
    width: 24px;
    height: 24px;
    margin-left: 16px;
    fill: none;
    stroke: #131722;
    stroke-width: 1.500;
}

.collapse {
    width: 43px;
    height: 31px;
    margin-top: 2px;
    border: 1px solid #c9ccd4;
    border-radius: 4px;
    background: #fff;
    display: flex;
    align-items: center;
    justify-content: center;
}

.collapse svg {
    width: 20px;
    height: 20px;
    fill: none;
    stroke: #131722;
    stroke-width: 1.600;
}

/* floating desktop widgets */
.timer {
    position: absolute;
    left: 3040.500px;
    top: 1520px;
    width: 48px;
    height: 48px;
    border: 2px solid #eef6fd;
    border-radius: 50%;
    background: linear-gradient(#4a9af5 78%, #7fd0fa 80%);
    box-shadow: 0 2px 5px rgba(0, 0, 0, 0.25);
    color: #fff;
    font-size: 14px;
    line-height: 45px;
    text-align: center;
    letter-spacing: -0.5px;
}

.netball {
    position: absolute;
    left: 3404px;
    top: 1629px;
    width: 188px;
    height: 73px;
    display: flex;
    align-items: center;
}

.netball::before {
    content: "";
    position: absolute;
    left: 30px;
    right: 0;
    top: 9px;
    height: 58px;
    border: 2px solid #b9b9b9;
    border-radius: 29px;
    background: linear-gradient(#f6f6f6, #dedede);
    box-shadow: 0 6px 12px rgba(0, 0, 0, 0.35);
}

.ball {
    position: relative;
    width: 72px;
    height: 72px;
    border: 3px solid #dfe5e1;
    border-radius: 50%;
    outline: 1px solid #aaa;
    background: linear-gradient(#0d7548 40%, #46cc58 41%);
    box-shadow: inset 0 0 0 2px #147a49, 0 5px 10px rgba(0, 0, 0, 0.35);
    color: #e8fbe9;
    font-size: 21px;
    line-height: 66px;
    text-align: center;
}

.speeds {
    position: relative;
    width: 78px;
    height: 58px;
    margin-top: 3px;
    padding: 7px 0;
    display: flex;
    flex-direction: column;
    justify-content: space-around;
}

.speeds span {
    display: flex;
    justify-content: space-between;
    padding: 0 5px 0 6px;
    color: #111;
    font-size: 13px;
    letter-spacing: -0.6px;
}

.speeds svg {
    width: 10px;
    height: 12px;
}

.plus {
    position: relative;
    width: 28px;
    height: 28px;
    margin-top: -4px;
    margin-left: 4px;
}

/* range bar */
.rangebar {
    flex: none;
    height: 60px;
    margin-bottom: 6px;
    padding: 0 17px 0 25px;
    background: #fff;
    border-top: 1px solid #e0e3eb;
    border-radius: 0 0 6px 6px;
    display: flex;
    align-items: center;
    gap: 22px;
    font-size: 20.500px;
    letter-spacing: -0.4px;
}

.rangebar .line {
    width: 1px;
    height: 33px;
    background: #d4d7e0;
}

.rangebar .ico {
    margin-left: -4px;
}

.rangebar .clock {
    letter-spacing: 0.1px;
}

.panels {
    flex: 1;
    background: #fff;
    border-radius: 6px 6px 0 0;
    display: flex;
    align-items: center;
    padding-right: 17px;
    font-size: 21px;
    letter-spacing: -0.2px;
}

.panels div {
    height: 57px;
    padding: 0 24px;
    border-right: 2px solid #e0e3eb;
    display: flex;
    align-items: center;
}

.panels div:first-child {
    padding-right: 5px;
}

.panels .chev {
    margin-left: 12px;
}

.panels .fill {
    border: 0;
}

.panels .ico {
    margin-left: 14px;
}

/* taskbar */
.taskbar {
    height: 60px;
    flex: none;
    background: #232323;
    display: flex;
    align-items: center;
    color: #fff;
}

.start {
    width: 24px;
    height: 28px;
    margin-left: 24px;
}

.taskview {
    width: 30px;
    height: 24px;
    margin-left: 45px;
}

.flower {
    width: 34px;
    height: 34px;
    margin-left: 43px;
}

.search {
    width: 330px;
    height: 51px;
    margin-left: 21px;
    background: #ececec;
    color: #111;
    display: flex;
    align-items: center;
}

.search svg {
    width: 26px;
    height: 28px;
    margin-left: 9px;
}

.search small {
    width: 12px;
    margin-left: 4px;
    color: #999;
    font-size: 10px;
}

.search span {
    flex: 1;
    margin-left: 8px;
    line-height: 30px;
    white-space: nowrap;
    letter-spacing: 0.3px;
}

.search b {
    width: 84px;
    background: #1e88ff;
    color: #fff;
    font-weight: 400;
    line-height: 51px;
    text-align: center;
}

.app1 {
    width: 32px;
    height: 36px;
    margin-left: 27px;
}

.iqiyi {
    width: 36px;
    height: 36px;
    margin-left: 41px;
    padding: 5px 3px;
    border-radius: 4px;
    background: #0bc414;
}

.iqiyi span {
    display: block;
    height: 26px;
    border: 2px solid #fff;
    border-radius: 4px;
    font-size: 10px;
    font-weight: 700;
    line-height: 22px;
    text-align: center;
    letter-spacing: -0.5px;
}

.app3 {
    width: 36px;
    height: 34px;
    margin-left: 39px;
}

.chrome {
    width: 61px;
    height: 60px;
    margin-left: 27px;
    border-bottom: 3px solid #76b9ed;
    display: flex;
    align-items: center;
    justify-content: center;
}

.chrome svg {
    width: 33px;
    height: 33px;
    margin-top: 3px;
}

.tray {
    width: 225px;
    height: 48px;
}

.datetime {
    width: 130px;
    padding-right: 6px;
    display: flex;
    flex-direction: column;
    align-items: center;
    gap: 2px;
    font-size: 20px;
    letter-spacing: -0.4px;
}

.datetime span {
    line-height: 22px;
}

.notes {
    width: 125px;
    height: 54px;
    margin: 6px 5px 0 0;
}

.notes text {
    fill: #fff;
    font-size: 19px;
    font-weight: 700;
}
```
FILE: script.js
```js
// candles: [up, high, bodyTop, bodyBottom, low], first one is 6 weeks before 2019
const candles = [
    [1, 1113.5, 1113.5, 1147.8, 1147.8], [0, 1111.4, 1121.2, 1174.3, 1216.7], [1, 1048.6, 1085.3, 1174.3, 1218.8], [0, 1080, 1084.5, 1144.5, 1242.4],
    [0, 1122.9, 1146.5, 1214.7, 1240.4], [0, 1142.9, 1213.5, 1238.4, 1309], [0, 1243.3, 1243.3, 1306.5, 1385.7], [1, 1213.9, 1218.4, 1307.8, 1331],
    [0, 1178.8, 1220.4, 1287.8, 1297.1], [0, 1264.9, 1290.2, 1312.7, 1369.4], [1, 1175.9, 1183.3, 1314.3, 1316.7], [1, 1091.8, 1147.3, 1180.4, 1186.5],
    [0, 1126.9, 1162.4, 1202.4, 1224.9], [0, 1188.2, 1198.4, 1209.4, 1286.1], [1, 1048.6, 1093.5, 1220.4, 1222.4], [0, 1081.2, 1088.6, 1202.4, 1215.9],
    [1, 1162, 1192.2, 1195.5, 1296.7], [1, 1095.1, 1111.4, 1183.7, 1213], [1, 1073, 1092.2, 1115.5, 1139.2], [0, 1088.2, 1089.4, 1157.5, 1171],
    [1, 1077.1, 1090.2, 1147.8, 1164.9], [1, 971, 1006.5, 1091.4, 1105.7], [0, 999.2, 1008.6, 1078.8, 1120], [0, 1044.5, 1067.3, 1097.5, 1122],
    [1, 1008.6, 1011.4, 1100.4, 1135.1], [0, 966.1, 1017.5, 1061.6, 1070.2], [1, 977.1, 1061.2, 1067.7, 1070.2], [0, 1037.1, 1058.4, 1193.4, 1206.9],
    [1, 1064.9, 1081.2, 1182.4, 1191], [0, 1042, 1072.2, 1252.6, 1252.6], [1, 1215.1, 1241.2, 1247.3, 1284.1], [1, 1082, 1116.3, 1232.2, 1233.9],
    [0, 1064.1, 1109.4, 1173.5, 1175], [1, 1082, 1129.4, 1158.8, 1184], [1, 1000.8, 1024.5, 1120.4, 1122.9], [1, 895.1, 1000.4, 1013.5, 1026.1],
    [0, 995.1, 999.6, 1076.7, 1112.6], [1, 969.8, 987.3, 1071.4, 1099.2], [0, 955.9, 991.4, 1105.7, 1118], [1, 884.1, 911.4, 1063.7, 1079.2],
    [0, 840, 908.6, 1011.4, 1012.6], [0, 873.9, 959.6, 1030.6, 1030.6], [1, 919.2, 954.3, 997.6, 1009.4], [1, 848.2, 871.4, 948.6, 977.1],
    [0, 802.9, 872.2, 907.8, 933.1], [0, 854.7, 909.4, 971.4, 989], [0, 931, 967.3, 1120.4, 1120.4], [1, 1024.1, 1034.3, 1095.5, 1120],
    [0, 1011.8, 1031.4, 1123.7, 1124.9], [1, 962.4, 962.4, 1110.6, 1118], [0, 955.9, 966.5, 1012.6, 1018], [1, 973.9, 979.6, 1015.5, 1053.9],
    [0, 944.1, 978.4, 979.2, 991], [0, 964.9, 978.4, 1053.5, 1093.9], [0, 1046.9, 1053.5, 1116.7, 1191], [1, 1043.3, 1052.2, 1116.7, 1148.2],
    [0, 1035.1, 1053.5, 1136.7, 1195.9], [0, 1124.9, 1136.3, 1151.4, 1219.6], [1, 1064.1, 1094.3, 1151.4, 1197.1], [1, 1055.9, 1058.4, 1094.7, 1128.2],
    [1, 1019.2, 1027.3, 1058.8, 1089.8], [0, 989, 1027.3, 1092.7, 1093.5], [1, 922, 924.5, 1092.7, 1092.7], [1, 866.5, 866.5, 924.5, 938],
    [1, 774, 844.5, 866.5, 882], [0, 806.9, 844.5, 996.7, 1018], [0, 997.6, 997.6, 1252.6, 1300.8], [1, 911, 925.3, 1250.6, 1432],
    [1, 385, 517.1, 925.6, 1082.9], [0, 386.8, 517.1, 974.7, 979.2], [1, 654.2, 675.6, 974.7, 977], [0, 643.9, 678.3, 826.5, 842.1],
    [1, 722.9, 797.5, 826.5, 910.9], [1, 652, 725.6, 797.5, 805.5], [0, 721.2, 732.3, 927.4, 931.9], [1, 710.9, 874.3, 941.7, 941.7],
    [1, 690.8, 716.3, 872.5, 872.5], [0, 702, 716.3, 787.7, 886.8], [0, 764, 787.2, 975.6, 1019.8], [0, 971.6, 975.6, 1144.4, 1209.2],
    [1, 1081, 1127.6, 1158.5, 1300.2], [1, 1048.1, 1055.4, 1127.6, 1210.3], [0, 1045, 1055.4, 1075.3, 1215.5], [0, 1037.1, 1075.3, 1119.2, 1163.2],
    [0, 1115.1, 1119.2, 1181.5, 1234.8], [0, 1175.2, 1181.5, 1262.6, 1291.8], [0, 1241.1, 1263.6, 1471.8, 1473.8], [0, 1461.3, 1471.8, 1583.7, 1697.7],
    [0, 1516.2, 1583.7, 1591.5, 1700.8], [0, 1526.2, 1591.5, 1628.7, 1650.1], [1, 1580.5, 1615.6, 1628.7, 1751], [0, 1594.1, 1615.6, 1728.6, 1742.2],
    [1, 1609.8, 1643.8, 1728.6, 1799.2], [1, 1557, 1606.7, 1643.8, 1678.9], [0, 1565.9, 1603.6, 1640.7, 1670], [1, 1421, 1442.5, 1639.6, 1672.6],
    [0, 1433.1, 1442.5, 1539.7, 1575.3], [0, 1527.2, 1538.7, 1633.4, 1640.2], [1, 1527.2, 1554.4, 1633.4, 1639.1], [0, 1543.9, 1549.7, 1669.5, 1707.1],
    [1, 1502.1, 1510.5, 1670.5, 1674.2], [0, 1475.9, 1529.3, 1737.4, 1744.2], [1, 1614, 1671.5, 1736.4, 1750]
];

const ma144 = '84,1326.5 105,1326.5 150,1324 172,1324 217,1321.7 262,1318.8 306,1314.7 329,1312.7 373,1311 396,1307.8 441,1304 486,1301.2 553,1299.6 597,1296.7 620,1295 664,1289.8 709,1288 776,1286 798,1286 845,1287.4 910,1287.4 933,1291 977,1295.5 1023,1303 1067,1309 1111,1316 1156,1321.6 1178,1323 1246,1330 1290,1336.8 1335,1342 1380,1348.6 1402,1351 1448,1353.9 1492,1353.9 1514,1352 1558,1352 1581,1350.7 1603,1346.6 1626,1345.8 1648,1341.3 1693,1334.3 1716,1328.6 1760,1318.8 1782,1312.3 1805,1307 1850,1298.6 1871,1292.9 1917,1283.5 1939,1279.8 1984,1275 2006,1274.6 2050,1277 2094,1278 2162,1278.8 2186,1280.3 2252,1276.7 2297,1272 2319,1268 2341,1265 2366,1263';

// x axis marks: [weeks since 2019, label]
const months = [
    [0, '2019'], [8, '3月'], [17, '5月'], [25, '7月'], [34, '9月'], [43, '11月'],
    [52, '2020'], [60, '3月'], [69, '5月'], [78, '7月'], [87, '9月'], [95, '11月'],
    [104, '2021'], [112, '3月'], [121, '5月'], [130, '7月'], [139, '9月'], [147, '11月']
];

const week = i => 217.1 + i * 22.36;
const price = p => 259.7 + (104 - p) * 125.5;
const line = (x1, y1, x2, y2, stroke, width, dash = 'none') =>
    `<line x1="${x1}" y1="${y1}" x2="${x2}" y2="${y2}" stroke="${stroke}" stroke-width="${width}" stroke-dasharray="${dash}"/>`;

let out = '<clipPath id="pane"><rect x="84" y="213" width="3591" height="1724"/></clipPath>';

// grid
months.forEach(([i]) => out += line(Math.round(week(i)), 213, Math.round(week(i)), 1937, '#e1e7ec', 1.5));
for (let p = 104; p >= 91; p -= 0.5) {
    out += line(84, price(p), 3675, price(p), '#e1e7ec', 1.5);
}

out += '<text class="mark" x="1617" y="1056" textLength="522" lengthAdjust="spacingAndGlyphs">DXY, 1W</text>';
out += '<text class="mark-cn" x="1735" y="1186">美元指数</text>';

// trend lines and levels
out += '<g clip-path="url(#pane)">';
out += line(96, 1035, 3140, 214, '#0000d8', 3.2, '15 18');
out += line(74.6, 1934, 3662, 741, '#e60000', 3, '15 18');
out += line(255.2, 1937, 3675, 1010, '#0000d8', 3.2, '15 18');
out += line(1357.6, 1219.5, 3675, 1219.5, '#000', 3);
out += line(1581, 1433.5, 3675, 1433.5, '#e815e0', 3);
out += line(2364, 1668.5, 3675, 1668.5, '#000', 3.2, '15 18');
out += `<polyline points="${ma144}" fill="none" stroke="#ee0606" stroke-width="4.5"/>`;

// 5 week average of the closes
const closes = candles.map(c => c[0] ? c[2] : c[3]);
let ma5 = '84,1164 105.3,1158.8 127.7,1147 150,1134';
for (let i = 4; i < closes.length; i++) {
    const avg = closes.slice(i - 4, i + 1).reduce((a, b) => a + b) / 5;
    ma5 += ` ${week(i - 6)},${avg}`;
}
out += `<polyline points="${ma5}" fill="none" stroke="#000" stroke-width="3"/>`;

candles.forEach(([up, high, top, bottom, low], i) => {
    const x = week(i - 6);
    out += line(x, high, x, low, '#aaa', 1);
    if (bottom - top < 2) {
        out += line(x - 8, top, x + 8, top, '#1f4d1f', 2);
    } else {
        out += `<rect x="${x - 8}" y="${top}" width="16" height="${bottom - top}" fill="${up ? '#f00' : '#0f0'}" stroke="${up ? '#5c1e0a' : '#0c4a0c'}"/>`;
    }
});

out += line(84, 1671.5, 3675, 1671.5, '#d02040', 1, '1.5 3');
out += line(84, 1475.5, 3675, 1475.5, '#888', 1.2, '5 5.7');
out += line(2855, 213, 2855, 1937, '#888', 1.2, '5 6');
out += '</g>';

// axes
out += line(3675.5, 213, 3675.5, 1978, '#50535e', 1.5);
out += line(84, 1937.5, 3765, 1937.5, '#50535e', 2.5);
for (let p = 104; p >= 91; p -= 0.5) {
    out += line(3675, price(p), 3682, price(p), '#50535e', 1.2);
    out += `<text x="3688.500" y="${price(p) + 6.5}">${p.toFixed(3)}</text>`;
}
months.forEach(([i, label]) => {
    out += line(week(i), 1938, week(i), 1944, '#50535e', 1.2);
    out += `<text class="${label.length > 3 ? 'year' : ''}" x="${week(i)}" y="1967" text-anchor="middle">${label}</text>`;
});

// price tags
[['96.355', 1219.5, '#000'], ['94.650', 1433.5, '#f0f'], ['94.319', 1475.5, '#4c525e'], ['92.755', 1695.5, '#f00'], ['92.775', 1668.5, '#000']].forEach(([label, y, color]) => {
    out += `<rect x="3675" y="${y - 13.5}" width="79" height="27" fill="${color}"/>`;
    out += line(3675, y, 3681, y, '#fff', 1.2);
    out += `<text class="tag" x="3688" y="${y + 6.5}">${label}</text>`;
});
out += '<rect x="3646" y="1462" width="27" height="27" fill="#4c525e"/><path d="M3652 1475.500h15M3659.500 1468v15" stroke="#fff" stroke-width="1.500"/>';
out += '<rect x="2803" y="1939" width="106" height="35" fill="#4c525e"/><path d="M2855 1939v5" stroke="#fff"/><text class="tag" x="2856" y="1964" text-anchor="middle">2021-04-12</text>';
out += '<rect x="3697" y="222.500" width="46" height="29" rx="4" fill="#fff" stroke="#d4d7e0"/><text x="3720" y="243" text-anchor="middle">USD</text>';

// axis settings
out += '<g fill="none" stroke="#131722" stroke-width="1.600"><circle cx="3720" cy="1959.500" r="7.500"/><path d="M3720 1952v-4M3720 1967v4M3712.500 1959.500h-4M3727.500 1959.500h4M3714.700 1954.200l-2.800-2.800M3725.300 1954.200l2.800-2.800M3714.700 1964.800l-2.800 2.800M3725.300 1964.800l2.800 2.800"/></g>';

// mouse pointer
out += '<path d="M2753 1431v28M2739 1445h28" stroke="#000" stroke-width="3"/>';

document.getElementById('chart').innerHTML = out;
```
